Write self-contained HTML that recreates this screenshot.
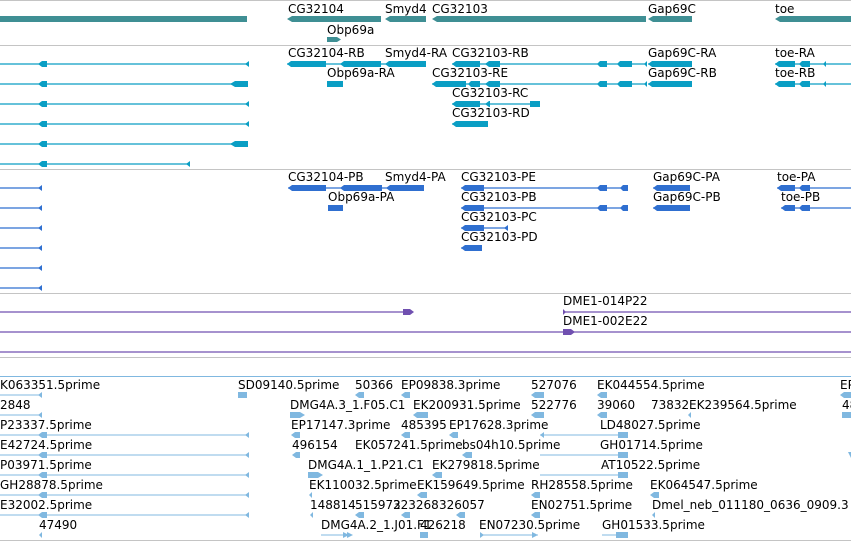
<!DOCTYPE html>
<html><head><meta charset="utf-8"><style>
html,body{margin:0;padding:0;background:#fff;width:851px;height:541px;overflow:hidden}
svg{display:block}
text{font-family:"DejaVu Sans","Liberation Sans",sans-serif;font-size:12px;fill:#000}
</style></head><body>
<svg width="851" height="541" viewBox="0 0 851 541" xmlns="http://www.w3.org/2000/svg">
<!-- separators -->
<g stroke="#c4c4c4" stroke-width="1">
<line x1="0" y1="0.5" x2="851" y2="0.5"/>
<line x1="0" y1="45.5" x2="851" y2="45.5"/>
<line x1="0" y1="169.5" x2="851" y2="169.5"/>
<line x1="0" y1="293.5" x2="851" y2="293.5"/>
<line x1="0" y1="357.5" x2="851" y2="357.5"/>
<line x1="0" y1="540.5" x2="851" y2="540.5"/>
</g>
<line x1="0" y1="376.5" x2="851" y2="376.5" stroke="#80b8e0"/>

<!-- genes teal -->
<g fill="#3f8f94">
<rect x="0" y="16" width="247" height="6"/>
<polygon points="287,19 292,16 381,16 381,22 292,22"/>
<polygon points="385,19 390,16 426,16 426,22 390,22"/>
<polygon points="432,19 437,16 646,16 646,22 437,22"/>
<polygon points="648,19 653,16 692,16 692,22 653,22"/>
<polygon points="775,19 780,16 851,16 851,22 780,22"/>
<polygon points="327,37 337,37 341,39.5 337,42 327,42"/>
</g>
<g>
<text x="288" y="13">CG32104</text><text x="385" y="13">Smyd4</text><text x="432" y="13">CG32103</text><text x="648" y="13">Gap69C</text><text x="775" y="13">toe</text>
<text x="327" y="34">Obp69a</text>
</g>

<!-- transcripts -->
<g fill="#0a9ec4" stroke="#0a9ec4">
<g stroke-width="1.2">
<line x1="0" y1="64" x2="248" y2="64"/><line x1="0" y1="84" x2="248" y2="84"/><line x1="0" y1="104" x2="248" y2="104"/>
<line x1="0" y1="124" x2="248" y2="124"/><line x1="0" y1="144" x2="248" y2="144"/><line x1="0" y1="164" x2="190" y2="164"/>
<line x1="287" y1="64" x2="426" y2="64"/><line x1="452" y1="64" x2="646" y2="64"/><line x1="648" y1="64" x2="692" y2="64"/><line x1="775" y1="64" x2="851" y2="64"/>
<line x1="432" y1="84" x2="646" y2="84"/><line x1="648" y1="84" x2="692" y2="84"/><line x1="775" y1="84" x2="851" y2="84"/>
<line x1="452" y1="104" x2="540" y2="104"/><line x1="452" y1="124" x2="488" y2="124"/>
</g>
<g stroke="none">
<polygon points="38,64 42,61 47,61 47,67 42,67"/><polygon points="38,84 42,81 47,81 47,87 42,87"/><polygon points="38,104 42,101 47,101 47,107 42,107"/>
<polygon points="38,124 42,121 47,121 47,127 42,127"/><polygon points="38,144 42,141 47,141 47,147 42,147"/><polygon points="38,164 42,161 47,161 47,167 42,167"/>
<polygon points="245,64 249,61 249,67"/><polygon points="245,104 249,101 249,107"/><polygon points="245,124 249,121 249,127"/><polygon points="186,164 190,161 190,167"/>
<polygon points="230,84 235,81 248,81 248,87 235,87"/><polygon points="230,144 235,141 248,141 248,147 235,147"/>
<polygon points="287,64 291,61 326,61 326,67 291,67"/><polygon points="340,64 344,61 381,61 381,67 344,67"/>
<polygon points="385,64 389,61 426,61 426,67 389,67"/>
<polygon points="327,81 343,81 343,87 327,87"/>
<polygon points="452,64 456,61 480,61 480,67 456,67"/><polygon points="485,64 489,61 500,61 500,67 489,67"/>
<polygon points="597,64 600,61 607,61 607,67 600,67"/><polygon points="617,64 620,61 632,61 632,67 620,67"/><polygon points="644,64 647,61 647,67"/>
<polygon points="648,64 652,61 692,61 692,67 652,67"/>
<polygon points="775,64 779,61 795,61 795,67 779,67"/><polygon points="799,64 802,61 810,61 810,67 802,67"/><polygon points="823,64 826,61 826,67"/>
<polygon points="432,84 436,81 466,81 466,87 436,87"/><polygon points="468,84 471,81 480,81 480,87 471,87"/><polygon points="485,84 489,81 500,81 500,87 489,87"/>
<polygon points="597,84 600,81 607,81 607,87 600,87"/><polygon points="617,84 620,81 632,81 632,87 620,87"/><polygon points="644,84 647,81 647,87"/>
<polygon points="648,84 652,81 692,81 692,87 652,87"/>
<polygon points="775,84 779,81 795,81 795,87 779,87"/><polygon points="799,84 802,81 810,81 810,87 802,87"/><polygon points="823,84 826,81 826,87"/>
<polygon points="452,104 456,101 480,101 480,107 456,107"/><polygon points="485,104 489,101 490,101 490,107 489,107"/><rect x="530" y="101" width="10" height="6"/>
<polygon points="452,124 456,121 488,121 488,127 456,127"/>
</g></g>
<g>
<text x="288" y="57">CG32104-RB</text><text x="385" y="57">Smyd4-RA</text><text x="452" y="57">CG32103-RB</text><text x="648" y="57">Gap69C-RA</text><text x="775" y="57">toe-RA</text>
<text x="327" y="77">Obp69a-RA</text><text x="432" y="77">CG32103-RE</text><text x="648" y="77">Gap69C-RB</text><text x="775" y="77">toe-RB</text>
<text x="452" y="97">CG32103-RC</text><text x="452" y="117">CG32103-RD</text>
</g>

<!-- proteins -->
<g fill="#2f6fd0" stroke="#2f6fd0">
<g stroke-width="1.2">
<line x1="0" y1="188" x2="42" y2="188"/><line x1="0" y1="208" x2="42" y2="208"/><line x1="0" y1="228" x2="42" y2="228"/>
<line x1="0" y1="248" x2="42" y2="248"/><line x1="0" y1="268" x2="42" y2="268"/><line x1="0" y1="288" x2="42" y2="288"/>
<line x1="288" y1="188" x2="424" y2="188"/><line x1="461" y1="188" x2="628" y2="188"/><line x1="653" y1="188" x2="690" y2="188"/><line x1="777" y1="188" x2="851" y2="188"/>
<line x1="461" y1="208" x2="628" y2="208"/><line x1="653" y1="208" x2="690" y2="208"/><line x1="781" y1="208" x2="851" y2="208"/>
<line x1="461" y1="228" x2="508" y2="228"/><line x1="461" y1="248" x2="482" y2="248"/>
</g>
<g stroke="none">
<polygon points="38,188 42,185 42,191"/><polygon points="38,208 42,205 42,211"/><polygon points="38,228 42,225 42,231"/>
<polygon points="38,248 42,245 42,251"/><polygon points="38,268 42,265 42,271"/><polygon points="38,288 42,285 42,291"/>
<polygon points="288,188 292,185 326,185 326,191 292,191"/><polygon points="340,188 344,185 382,185 382,191 344,191"/><polygon points="386,188 390,185 424,185 424,191 390,191"/>
<rect x="328" y="205" width="15" height="6"/>
<polygon points="461,188 465,185 484,185 484,191 465,191"/><polygon points="597,188 600,185 607,185 607,191 600,191"/><polygon points="620,188 623,185 628,185 628,191 623,191"/>
<polygon points="653,188 657,185 690,185 690,191 657,191"/><polygon points="777,188 781,185 795,185 795,191 781,191"/><polygon points="799,188 802,185 810,185 810,191 802,191"/>
<polygon points="461,208 465,205 484,205 484,211 465,211"/><polygon points="597,208 600,205 607,205 607,211 600,211"/><polygon points="620,208 623,205 628,205 628,211 623,211"/>
<polygon points="653,208 657,205 690,205 690,211 657,211"/><polygon points="781,208 785,205 795,205 795,211 785,211"/><polygon points="799,208 802,205 810,205 810,211 802,211"/>
<polygon points="461,228 465,225 484,225 484,231 465,231"/><polygon points="504,228 508,225 508,231"/>
<polygon points="461,248 465,245 482,245 482,251 465,251"/>
</g></g>
<g>
<text x="288" y="181">CG32104-PB</text><text x="385" y="181">Smyd4-PA</text><text x="461" y="181">CG32103-PE</text><text x="653" y="181">Gap69C-PA</text><text x="777" y="181">toe-PA</text>
<text x="328" y="201">Obp69a-PA</text><text x="461" y="201">CG32103-PB</text><text x="653" y="201">Gap69C-PB</text><text x="781" y="201">toe-PB</text>
<text x="461" y="221">CG32103-PC</text><text x="461" y="241">CG32103-PD</text>
</g>

<!-- purple -->
<g fill="#7050b0" stroke="#7050b0">
<line x1="0" y1="312" x2="412" y2="312" stroke-width="1.2"/>
<line x1="563" y1="312" x2="851" y2="312" stroke-width="1.2"/>
<line x1="0" y1="332" x2="851" y2="332" stroke-width="1.2"/>
<line x1="0" y1="352" x2="851" y2="352" stroke-width="1.2"/>
<polygon points="403,309 410,309 414,312 410,315 403,315" stroke="none"/>
<polygon points="563,309 566,312 563,315" stroke="none"/>
<polygon points="563,329 571,329 575,332 571,335 563,335" stroke="none"/>
</g>
<text x="563" y="305">DME1-014P22</text><text x="563" y="325">DME1-002E22</text>

<!-- ESTs -->
<g fill="#80b8e0" stroke="#80b8e0">
<g stroke-width="1">
<line x1="0" y1="395" x2="42" y2="395"/><line x1="0" y1="415" x2="42" y2="415"/>
<line x1="0" y1="435" x2="248" y2="435"/><line x1="0" y1="455" x2="248" y2="455"/><line x1="0" y1="475" x2="248" y2="475"/><line x1="0" y1="495" x2="248" y2="495"/><line x1="0" y1="515" x2="248" y2="515"/>
<line x1="540" y1="435" x2="628" y2="435"/><line x1="540" y1="455" x2="628" y2="455"/><line x1="540" y1="475" x2="628" y2="475"/>
<line x1="321" y1="535" x2="352" y2="535"/><line x1="480" y1="535" x2="538" y2="535"/><line x1="602" y1="535" x2="628" y2="535"/>
</g>
<g stroke="none">
<polygon points="38,395 42,392 42,398"/><polygon points="38,415 42,412 42,418"/>
<polygon points="38,435 42,432 47,432 47,438 42,438"/><polygon points="38,455 42,452 47,452 47,458 42,458"/><polygon points="38,475 42,472 47,472 47,478 42,478"/><polygon points="38,495 42,492 47,492 47,498 42,498"/><polygon points="38,515 42,512 47,512 47,518 42,518"/>
<polygon points="245,435 249,432 249,438"/><polygon points="245,455 249,452 249,458"/><polygon points="245,475 249,472 249,478"/><polygon points="245,495 249,492 249,498"/><polygon points="245,515 249,512 249,518"/>
<polygon points="39,535 42,532 42,538"/>
<rect x="238" y="392" width="9" height="6"/>
<polygon points="355,395 359,392 364,392 364,398 359,398"/><polygon points="401,395 405,392 410,392 410,398 405,398"/>
<polygon points="531,395 535,392 544,392 544,398 535,398"/><polygon points="597,395 601,392 607,392 607,398 601,398"/><polygon points="840,395 844,392 851,392 851,398 844,398"/>
<polygon points="290,412 300,412 305,415 300,418 290,418"/><polygon points="413,415 417,412 428,412 428,418 417,418"/>
<polygon points="531,415 535,412 544,412 544,418 535,418"/><polygon points="597,415 601,412 607,412 607,418 601,418"/><polygon points="688,415 691,412 691,418"/><polygon points="842,412 851,412 851,418 842,418"/>
<polygon points="291,435 295,432 300,432 300,438 295,438"/><polygon points="401,435 405,432 410,432 410,438 405,438"/><polygon points="449,435 453,432 458,432 458,438 453,438"/>
<polygon points="540,435 544,432 544,438"/><polygon points="618,432 628,432 628,438 618,438"/>
<polygon points="292,455 296,452 300,452 300,458 296,458"/><polygon points="462,455 466,452 472,452 472,458 466,458"/><polygon points="618,452 628,452 628,458 618,458"/><polygon points="848,452 851,452 851,458"/>
<polygon points="308,472 318,472 323,475 318,478 308,478"/><polygon points="432,475 436,472 442,472 442,478 436,478"/><polygon points="618,472 628,472 628,478 618,478"/>
<polygon points="309,495 312,492 312,498"/><polygon points="417,495 421,492 427,492 427,498 421,498"/><polygon points="531,495 535,492 540,492 540,498 535,498"/><polygon points="650,495 654,492 659,492 659,498 654,498"/>
<polygon points="310,515 313,512 313,518"/><polygon points="355,515 359,512 364,512 364,518 359,518"/><polygon points="401,515 405,512 410,512 410,518 405,518"/><polygon points="456,515 460,512 465,512 465,518 460,518"/><polygon points="531,515 535,512 540,512 540,518 535,518"/><polygon points="652,515 655,512 655,518"/>
<polygon points="343,532 349,535 343,538"/><polygon points="347,532 353,535 347,538"/><polygon points="420,532 428,532 428,538 420,538"/><polygon points="480,532 484,535 480,538"/><polygon points="532,532 538,535 532,538"/><polygon points="616,532 628,532 628,538 616,538"/>
</g></g>
<g>
<text x="0" y="389">K063351.5prime</text><text x="238" y="389">SD09140.5prime</text><text x="355" y="389">50366</text><text x="401" y="389">EP09838.3prime</text><text x="531" y="389">527076</text><text x="597" y="389">EK044554.5prime</text><text x="840" y="389">EP</text>
<text x="0" y="409">2848</text><text x="290" y="409">DMG4A.3_1.F05.C1</text><text x="413" y="409">EK200931.5prime</text><text x="531" y="409">522776</text><text x="597" y="409">39060</text><text x="651" y="409">73832</text><text x="689" y="409">EK239564.5prime</text><text x="842" y="409">48</text>
<text x="0" y="429">P23337.5prime</text><text x="291" y="429">EP17147.3prime</text><text x="401" y="429">485395</text><text x="449" y="429">EP17628.3prime</text><text x="600" y="429">LD48027.5prime</text>
<text x="0" y="449">E42724.5prime</text><text x="292" y="449">496154</text><text x="355" y="449">EK057241.5prime</text><text x="462" y="449">bs04h10.5prime</text><text x="600" y="449">GH01714.5prime</text>
<text x="0" y="469">P03971.5prime</text><text x="308" y="469">DMG4A.1_1.P21.C1</text><text x="432" y="469">EK279818.5prime</text><text x="601" y="469">AT10522.5prime</text>
<text x="0" y="489">GH28878.5prime</text><text x="309" y="489">EK110032.5prime</text><text x="417" y="489">EK159649.5prime</text><text x="531" y="489">RH28558.5prime</text><text x="650" y="489">EK064547.5prime</text>
<text x="0" y="509">E32002.5prime</text><text x="310" y="509">148814</text><text x="355" y="509">515972</text><text x="393" y="509">323268</text><text x="439" y="509">326057</text><text x="531" y="509">EN02751.5prime</text><text x="652" y="509">Dmel_neb_011180_0636_0909.3</text>
<text x="39" y="529">47490</text><text x="321" y="529">DMG4A.2_1.J01.F1</text><text x="420" y="529">426218</text><text x="479" y="529">EN07230.5prime</text><text x="602" y="529">GH01533.5prime</text>
</g>
</svg>
</body></html>
